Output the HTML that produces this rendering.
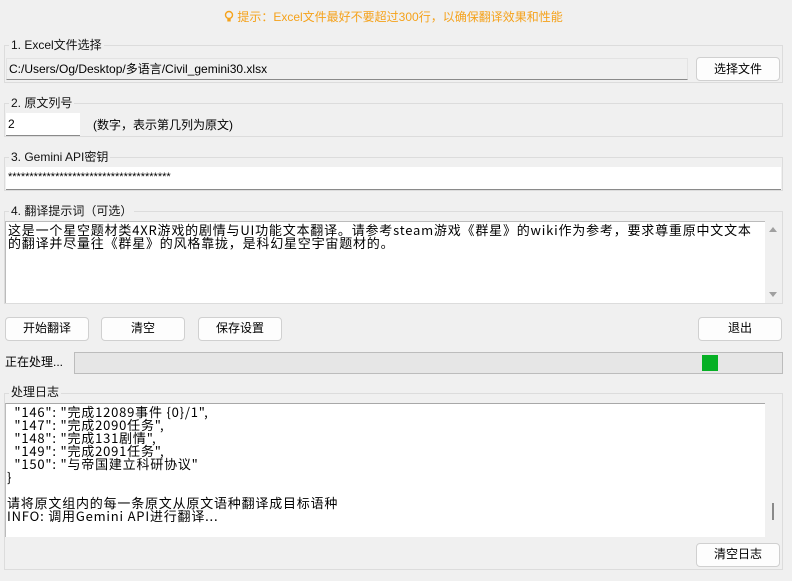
<!DOCTYPE html>
<html><head><meta charset="utf-8"><style>
*{margin:0;padding:0;box-sizing:border-box}
body{width:792px;height:581px;background:#f0f0f0;font-family:"Liberation Sans","Noto Sans CJK SC",sans-serif;font-size:12px;color:#000;position:relative;overflow:hidden}
.a{position:absolute}
.grp{position:absolute;border:1px solid #dcdcdc;}
.ttl{position:absolute;background:#f0f0f0;padding:0 2px;font-size:12px;line-height:14px;color:#111}
.btn{position:absolute;background:#fdfdfd;border:1px solid #d0d0d0;border-radius:4px;text-align:center;font-size:12px;line-height:21px}
.inp{position:absolute;background:#fff;border-bottom:1px solid #8a8a8a;font-size:12px;padding-left:2px}
.mono{font-family:"Noto Sans CJK SC",monospace;font-size:13px;letter-spacing:0.8px;line-height:13px;white-space:pre;overflow:hidden}
</style></head><body>
<div class="a" style="left:224px;top:9px;color:#f5a21b;font-size:12px;line-height:16px">
<svg width="10" height="13" viewBox="0 0 10 13" style="vertical-align:-2px"><circle cx="5" cy="5" r="3.5" fill="none" stroke="#f5a21b" stroke-width="1.4"/><rect x="3.3" y="9" width="3.4" height="2.5" fill="#f5a21b"/></svg> 提示：Excel文件最好不要超过300行，以确保翻译效果和性能</div>

<div class="grp" style="left:4px;top:45px;width:779px;height:38px"></div>
<div class="ttl" style="left:9px;top:38px">1. Excel文件选择</div>
<div class="inp" style="left:6px;top:58px;width:682px;height:22px;background:#f0f0f0;border:1px solid #e3e3e3;border-bottom:1px solid #8a8a8a;line-height:20px">C:/Users/Og/Desktop/多语言/Civil_gemini30.xlsx</div>
<div class="btn" style="left:696px;top:57px;width:84px;height:24px;line-height:22px">选择文件</div>

<div class="grp" style="left:4px;top:103px;width:779px;height:34px"></div>
<div class="ttl" style="left:9px;top:96px">2. 原文列号</div>
<div class="inp" style="left:6px;top:113px;width:74px;height:23px;line-height:22px">2</div>
<div class="a" style="left:93px;top:117px;line-height:16px">(数字，表示第几列为原文)</div>

<div class="grp" style="left:4px;top:157px;width:779px;height:34px"></div>
<div class="ttl" style="left:9px;top:150px">3. Gemini API密钥</div>
<div class="inp" style="left:6px;top:167px;width:775px;height:23px;line-height:20px;font-size:11px">**************************************</div>

<div class="grp" style="left:4px;top:211px;width:779px;height:93px"></div>
<div class="ttl" style="left:9px;top:204px">4. 翻译提示词（可选）</div>
<div class="a mono" style="left:5px;top:221px;width:760px;height:82px;background:#fff;border-left:1px solid #bbb;border-top:1px solid #bbb;padding:1px 2px">这是一个星空题材类4XR游戏的剧情与UI功能文本翻译。请参考steam游戏《群星》的wiki作为参考，要求尊重原中文文本
的翻译并尽量往《群星》的风格靠拢，是科幻星空宇宙题材的。</div>
<div class="a" style="left:765px;top:221px;width:17px;height:82px;background:#f0f0f0"></div>
<div class="a" style="left:769px;top:227px;width:0;height:0;border-left:4px solid transparent;border-right:4px solid transparent;border-bottom:5px solid #a0a0a0"></div>
<div class="a" style="left:769px;top:292px;width:0;height:0;border-left:4px solid transparent;border-right:4px solid transparent;border-top:5px solid #a0a0a0"></div>

<div class="btn" style="left:5px;top:317px;width:84px;height:24px">开始翻译</div>
<div class="btn" style="left:101px;top:317px;width:84px;height:24px">清空</div>
<div class="btn" style="left:198px;top:317px;width:84px;height:24px">保存设置</div>
<div class="btn" style="left:698px;top:317px;width:84px;height:24px">退出</div>

<div class="a" style="left:5px;top:354px;line-height:16px">正在处理...</div>
<div class="a" style="left:74px;top:352px;width:709px;height:22px;background:#e6e6e6;border:1px solid #bcbcbc"></div>
<div class="a" style="left:702px;top:355px;width:16px;height:16px;background:#06b025"></div>

<div class="grp" style="left:4px;top:393px;width:779px;height:177px"></div>
<div class="ttl" style="left:9px;top:385px">处理日志</div>
<div class="a mono" style="left:5px;top:403px;width:760px;height:134px;background:#fff;border-top:1px solid #a8a8a8;border-left:1px solid #bbb;padding:1px 1px">  "146": "完成12089事件 {0}/1",
  "147": "完成2090任务",
  "148": "完成131剧情",
  "149": "完成2091任务",
  "150": "与帝国建立科研协议"
}

请将原文组内的每一条原文从原文语种翻译成目标语种
INFO: 调用Gemini API进行翻译...</div>
<div class="a" style="left:772px;top:503px;width:2px;height:17px;background:#8a8a8a"></div>
<div class="btn" style="left:696px;top:543px;width:84px;height:24px">清空日志</div>
</body></html>
